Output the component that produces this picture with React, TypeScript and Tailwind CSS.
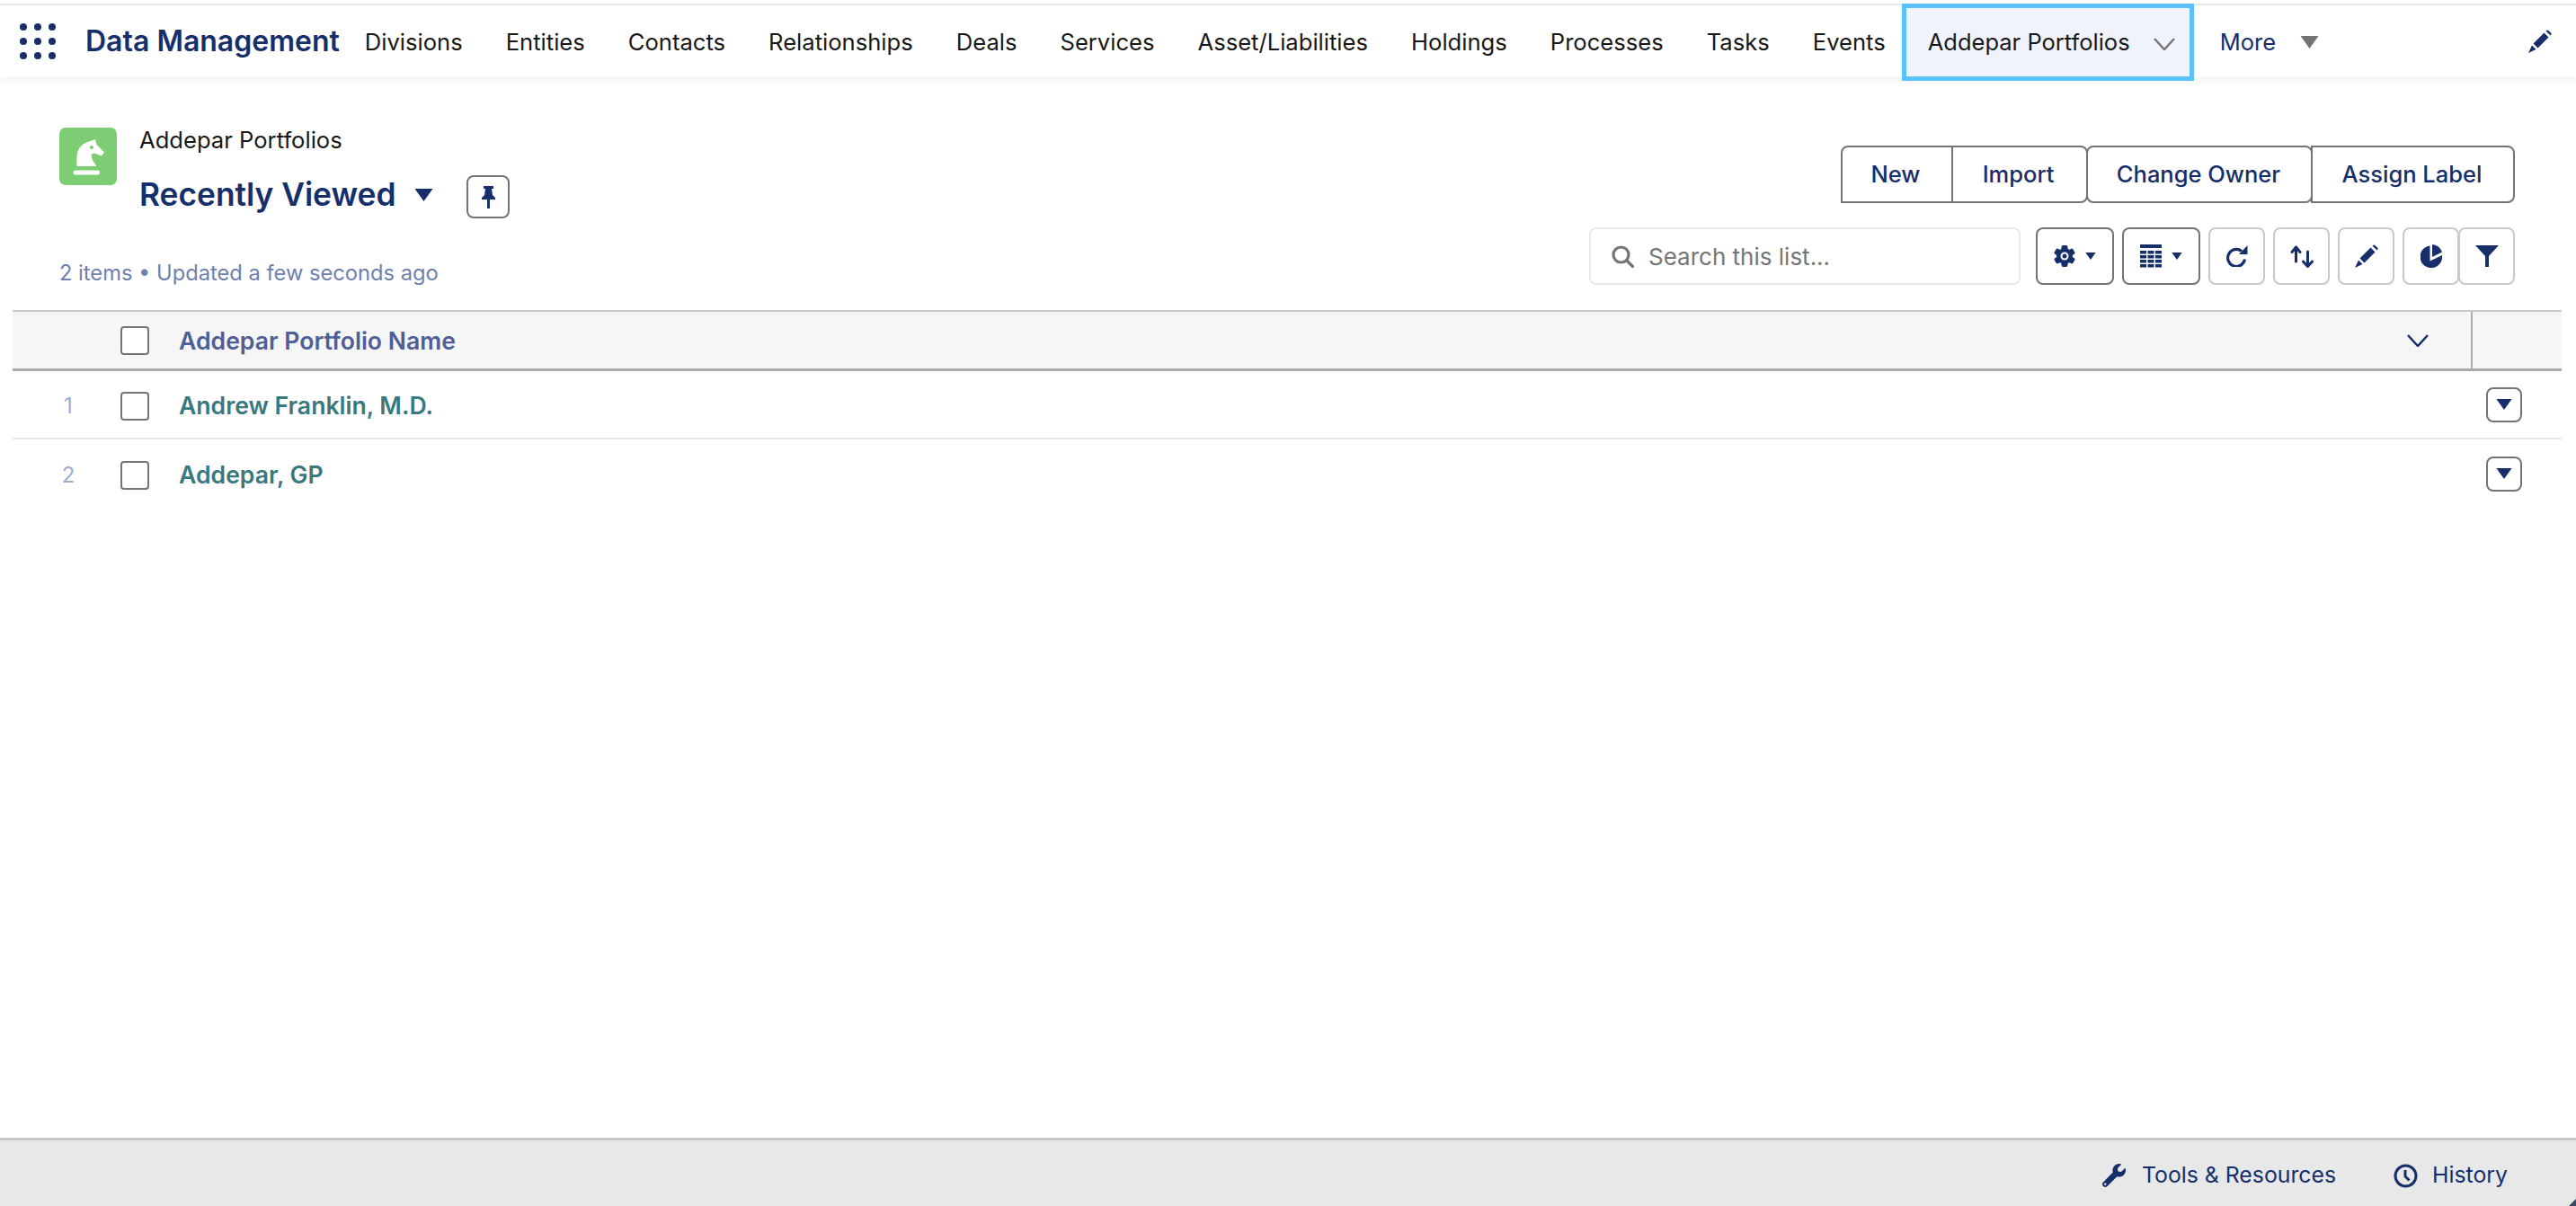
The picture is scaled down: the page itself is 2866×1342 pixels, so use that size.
import { FaWrench } from "react-icons/fa";

const navItems = [
  "Divisions",
  "Entities",
  "Contacts",
  "Relationships",
  "Deals",
  "Services",
  "Asset/Liabilities",
  "Holdings",
  "Processes",
  "Tasks",
  "Events",
];

const rows = ["Andrew Franklin, M.D.", "Addepar, GP"];

const Pencil = ({ className }: { className: string }) => (
  <svg viewBox="0 0 26 26" className={className} fill="#162f6a">
    <path d="M5.500 15.500 17.500 3.500l5 5-12 12z" />
    <path d="M19.500 1.500 20 1a1.700 1.700 0 0 1 2.400 0L25 3.600a1.700 1.700 0 0 1 0 2.400l-.5.500z" />
    <path d="M4 17.500 8.500 22 0 26z" />
  </svg>
);

const Caret = ({ className, color = "#162f6a" }: { className: string; color?: string }) => (
  <svg viewBox="0 0 20 14" className={className} fill={color}>
    <path d="M0 0h20L10 14z" />
  </svg>
);

const Gear = () => (
  <svg viewBox="0 0 24 24" className="w-6 h-6" fill="#162f6a">
    <g>
      <rect x="8.500" y="0" width="7" height="24" rx="2" />
      <rect x="8.500" y="0" width="7" height="24" rx="2" transform="rotate(60 12 12)" />
      <rect x="8.500" y="0" width="7" height="24" rx="2" transform="rotate(120 12 12)" />
      <circle cx="12" cy="12" r="9" />
    </g>
    <circle cx="12" cy="12" r="4.500" fill="white" />
    <circle cx="12" cy="12" r="2.500" />
  </svg>
);

const TableIcon = () => (
  <svg viewBox="0 0 24 26" className="w-6 h-[26px]" fill="#162f6a">
    <rect x="0" y="0" width="24" height="4" />
    {[7, 12, 17, 22].map((y) =>
      [0, 8.5, 17].map((x) => <rect key={`${x}-${y}`} x={x} y={y} width="7" height="3.500" />)
    )}
  </svg>
);

const Refresh = () => (
  <svg viewBox="0 0 25 24" className="w-[25px] h-6">
    <path d="M18 6.500A9.500 9.500 0 1 0 21.500 15.500" fill="none" stroke="#162f6a" strokeWidth="3.200" />
    <path d="M24.500 0v10H15z" fill="#162f6a" />
  </svg>
);

const Swap = () => (
  <svg viewBox="0 0 26 25" className="w-[26px] h-[25px]" fill="none" stroke="#162f6a" strokeWidth="3" strokeLinecap="round" strokeLinejoin="round">
    <path d="M6.500 18V2M2 7.500 6.500 2 11 7.500" />
    <path d="M19.500 7v16.500M14.500 18l5 5.500 5-5.500" />
  </svg>
);

const Pie = () => (
  <svg viewBox="0 0 24 26" className="w-6 h-[26px]" fill="#162f6a">
    <path d="M13 0a12 12 0 0 1 11 8.500L13 14z" />
    <path d="M10.500 1.500A12.300 12.300 0 1 0 24 12l-13.500 6.500z" />
  </svg>
);

const Funnel = () => (
  <svg viewBox="0 0 26 24" className="w-[26px] h-6" fill="#162f6a">
    <path d="M0 0h26L15 12v11a1 1 0 0 1-4 0V12z" />
  </svg>
);

// outlined square button of the list toolbar
const ToolButton = ({ children, className = "" }: { children: React.ReactNode; className?: string }) => (
  <button className={`w-[63px] h-16 rounded-lg border-2 border-[#c9c9c9] bg-white flex items-center justify-center ${className}`}>
    {children}
  </button>
);

const MenuButton = ({ children }: { children: React.ReactNode }) => (
  <button className="w-[87px] h-16 rounded-lg border-2 border-[#747474] bg-white flex items-center justify-center gap-[11px]">
    {children}
    <Caret className="w-3 h-2" />
  </button>
);

const RowAction = () => (
  <button className="-mt-[4px] w-10 h-[39px] rounded-lg border-2 border-[#747474] flex items-center justify-center">
    <Caret className="w-[18px] h-3" />
  </button>
);

const App = () => {
  return (
    <div className="relative w-full h-[1342px] flex flex-col bg-white font-[Inter,sans-serif] overflow-hidden">
      {/* Top nav */}
      <div className="mt-1 border-t-2 border-[#e8e8e8] h-[82px] flex items-center bg-white shadow-[0_4px_8px_rgba(0,0,0,0.06)] relative z-10">
        <svg viewBox="0 0 40 40" className="ml-[22px] w-10 h-10 shrink-0" fill="#162f6a">
          {[4, 20, 36].map((cy) =>
            [4, 20, 36].map((cx) => <circle key={`${cx}-${cy}`} cx={cx} cy={cy} r="4" />)
          )}
        </svg>
        <span className="ml-[33px] text-[32px] font-semibold text-[#162f6a] whitespace-nowrap">Data Management</span>
        <nav className="ml-[4px] flex items-center h-full">
          {navItems.map((item) => (
            <a key={item} className="px-[24px] pt-[2px] text-[25.600px] text-[#181818] whitespace-nowrap">
              {item}
            </a>
          ))}
          <a className="-ml-[6px] w-[325px] h-[86px] -mt-[2px] self-start shrink-0 border-[5px] border-[#5bc2fb] bg-[#f0f3fb] flex items-center pl-[24px] text-[25.500px] text-[#181818] whitespace-nowrap">
            Addepar Portfolios
            <svg viewBox="0 0 24 14" className="ml-[26px] mt-[4px] w-6 h-[14px]" fill="none" stroke="#747474" strokeWidth="2.500">
              <path d="M1 1l11 12L23 1" />
            </svg>
          </a>
          <a className="ml-[29px] pt-[2px] text-[25.500px] text-[#162f6a]">More</a>
          <Caret className="ml-[27px] mt-[1px] w-[21px] h-[14px]" color="#747474" />
        </nav>
        <Pencil className="ml-auto mr-[26px] w-[28px] h-[26px]" />
      </div>

      {/* List header */}
      <div className="h-[259px] pl-[66px] pr-[68px] flex justify-between">
        <div className="pt-[56px]">
          <div className="flex">
            <div className="w-16 h-16 rounded-[7px] bg-[#7dcd74] shrink-0">
              <svg viewBox="0 0 64 64" className="w-16 h-16">
                <path d="M19.500 43C18.500 30 20 19 33 15.500L40 13l1.500 6L50 27.500 47 31.500l-8-3-3.500 1.500c.5 6 3.500 9 6 13z" fill="white" />
                <circle cx="36" cy="22" r="2" fill="#7dcd74" />
                <rect x="15.500" y="47.500" width="29.500" height="5" rx="2.500" fill="white" />
              </svg>
            </div>
            <div className="ml-[25px]">
              <p className="-mt-[1px] text-[25.600px] leading-[30px] text-[#181818] whitespace-nowrap">Addepar Portfolios</p>
              <div className="mt-[24px] flex items-center h-12">
                <h1 className="-mt-[4px] text-[35.300px] font-semibold text-[#162f6a] whitespace-nowrap">Recently Viewed</h1>
                <Caret className="ml-[21px] -mt-[4px] w-[21px] h-[14px]" />
                <button className="ml-[37px] w-12 h-12 rounded-lg border-2 border-[#747474] flex items-center justify-center">
                  <svg viewBox="0 0 15 25" className="w-[15px] h-[25px]" fill="#162f6a">
                    <path d="M2 0h11v3h-2l1 7 3 3v2H0v-2l3-3 1-7H2z" />
                    <path d="M6 15h3v9a1.500 1.500 0 0 1-3 0z" />
                  </svg>
                </button>
              </div>
            </div>
          </div>
          <p className="mt-[46px] text-[23.700px] leading-[30px] text-[#6f7fae] whitespace-nowrap">2 items • Updated a few seconds ago</p>
        </div>

        <div className="pt-[76px] flex flex-col items-end">
          <div className="flex h-16 text-[25.500px] font-medium text-[#162f6a]">
            <button className="w-[125px] pr-[3px] pt-[1px] border-2 border-[#747474] rounded-tl-lg">New</button>
            <button className="w-[152px] -ml-[2px] pr-[3px] pt-[1px] border-2 border-[#747474] rounded-r-lg">Import</button>
            <button className="w-[252px] -ml-[2px] pr-[2px] pt-[1px] border-2 border-[#747474] rounded-lg">Change Owner</button>
            <button className="w-[227px] -ml-[2px] pr-[2px] pt-[1px] border-2 border-[#747474] rounded-r-lg">Assign Label</button>
          </div>
          <div className="mt-[27px] flex items-center">
            <div className="w-[480px] h-16 rounded-lg border-2 border-[#e5e8ec] flex items-center pl-[23px] mr-[17px]">
              <svg viewBox="0 0 25 25" className="w-[25px] h-[25px]" fill="none" stroke="#757575" strokeWidth="3.200" strokeLinecap="round">
                <circle cx="10.500" cy="10.500" r="8.500" />
                <path d="M17 17l6.500 6.500" />
              </svg>
              <span className="ml-[16px] text-[26px] text-[#757575] whitespace-nowrap">Search this list...</span>
            </div>
            <div className="flex gap-[9px]">
              <MenuButton>
                <Gear />
              </MenuButton>
              <MenuButton>
                <TableIcon />
              </MenuButton>
              <ToolButton>
                <Refresh />
              </ToolButton>
              <ToolButton>
                <Swap />
              </ToolButton>
              <ToolButton>
                <Pencil className="w-[26px] h-[26px]" />
              </ToolButton>
              <div className="flex">
                <ToolButton>
                  <Pie />
                </ToolButton>
                <ToolButton className="-ml-[1px]">
                  <Funnel />
                </ToolButton>
              </div>
            </div>
          </div>
        </div>
      </div>

      {/* Table */}
      <div className="ml-[14px] mr-[16px]">
        <div className="h-[68px] flex items-center bg-[#f6f6f6] border-t-2 border-b-[3px] border-t-[#c9c9c9] border-b-[#ababab]">
          <div className="w-[120px] shrink-0" />
          <span className="w-8 h-8 rounded-[4px] border-2 border-[#747474] bg-white shrink-0" />
          <span className="ml-[33px] pt-[3px] text-[26.600px] font-semibold text-[#4d5f96] whitespace-nowrap">Addepar Portfolio Name</span>
          <svg viewBox="0 0 24 14" className="ml-auto mr-[47px] w-6 h-[14px]" fill="none" stroke="#162f6a" strokeWidth="2.500">
            <path d="M1 1l11 12L23 1" />
          </svg>
          <div className="w-[101px] h-full border-l-2 border-[#ababab] shrink-0" />
        </div>
        {rows.map((name, i) => (
          <div key={name} className={`h-[76px] pt-[4px] flex items-center ${i === 0 ? "border-b-2 border-[#e5e5e5]" : ""}`}>
            <span className="w-[120px] pl-1 text-center text-[24px] text-[#9dadcf] shrink-0">{i + 1}</span>
            <span className="w-8 h-8 rounded-[4px] border-2 border-[#747474] bg-white shrink-0" />
            <span className="ml-[33px] text-[26.600px] font-semibold text-[#38797f] whitespace-nowrap">{name}</span>
            <div className="ml-auto w-[84px] shrink-0">
              <RowAction />
            </div>
          </div>
        ))}
      </div>

      {/* Footer */}
      <div className="mt-auto h-[76px] bg-[#e8e8e8] border-t-[3px] border-[#c9c9c9] flex items-center justify-end pt-[5px] pr-[76px] text-[24.800px] text-[#162f6a]">
        <FaWrench className="w-[26px] h-[26px]" />
        <span className="ml-[18px]">Tools &amp; Resources</span>
        <svg viewBox="0 0 27 27" className="ml-[64px] w-[27px] h-[27px]" fill="none" stroke="#162f6a" strokeWidth="3">
          <circle cx="13.500" cy="13.500" r="11.500" />
          <path d="M13 7v7l4.500 4.500" />
        </svg>
        <span className="ml-[16px]">History</span>
      </div>

      {/* window corner */}
      <svg viewBox="0 0 8 8" className="absolute right-0 bottom-0 w-2 h-2" fill="#3a4a66">
        <path d="M8 0v8H0z" />
      </svg>
    </div>
  );
};

export default App;
